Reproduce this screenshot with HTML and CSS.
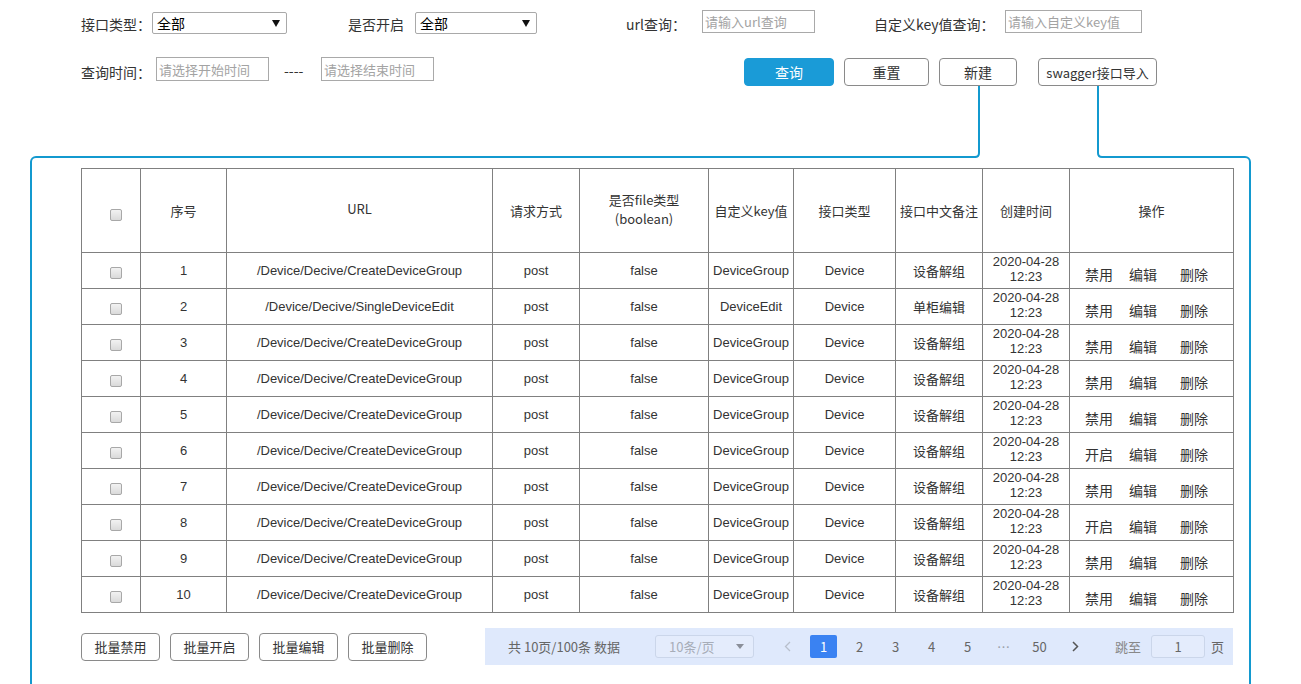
FILE: index.html
```html
<!DOCTYPE html>
<html lang="zh-CN">
<head>
<meta charset="utf-8">
<title>接口管理</title>
<link rel="stylesheet" href="styles.css">
</head>
<body>
<div class="filters">
  <div class="row1">
    <div class="field">
      <span class="lbl w1">接口类型：</span>
      <div class="sel s1"><span>全部</span><i class="tri"></i></div>
    </div>
    <div class="field g2">
      <span class="lbl w2">是否开启</span>
      <div class="sel s2"><span>全部</span><i class="tri"></i></div>
    </div>
    <div class="field g3">
      <span class="lbl w3">url查询：</span>
      <input class="inp i1" placeholder="请输入url查询">
    </div>
    <div class="field g4">
      <span class="lbl w4">自定义key值查询：</span>
      <input class="inp i2" placeholder="请输入自定义key值">
    </div>
  </div>
  <div class="row2">
    <span class="lbl w5">查询时间：</span>
    <input class="inp date" placeholder="请选择开始时间">
    <span class="sep">----</span>
    <input class="inp date" placeholder="请选择结束时间">
    <div class="btns">
      <button class="btn primary b-query">查询</button>
      <button class="btn b-reset">重置</button>
      <button class="btn b-new">新建</button>
      <button class="btn b-swag">swagger接口导入</button>
    </div>
  </div>
</div>

<div class="panel">
  <svg class="connector" width="140" height="76" viewBox="0 0 140 76">
    <rect x="6" y="68" width="126" height="6" fill="#fff"/>
    <path d="M9 0 V67 Q9 71 5 71 H0" fill="none" stroke="#1399cf" stroke-width="2"/>
    <path d="M128 0 V67 Q128 71 132 71 H140" fill="none" stroke="#1399cf" stroke-width="2"/>
  </svg>

  <table class="grid">
    <colgroup>
      <col style="width:59px"><col style="width:86px"><col style="width:266px"><col style="width:87px"><col style="width:129px"><col style="width:85px"><col style="width:102px"><col style="width:87px"><col style="width:87px"><col style="width:164px">
    </colgroup>
    <thead>
      <tr>
        <th class="cbc"><span class="cb hcb"></span></th>
        <th>序号</th>
        <th><span class="up">URL</span></th>
        <th>请求方式</th>
        <th><span class="up">是否file类型<br>(boolean)</span></th>
        <th>自定义key值</th>
        <th>接口类型</th>
        <th>接口中文备注</th>
        <th>创建时间</th>
        <th>操作</th>
      </tr>
    </thead>
    <tbody>
      <tr><td class="cbc"><span class="cb"></span></td><td>1</td><td>/Device/Decive/CreateDeviceGroup</td><td>post</td><td>false</td><td>DeviceGroup</td><td>Device</td><td class="zh">设备解组</td><td><span class="dtx">2020-04-28<br>12:23</span></td><td class="ops"><span class="op o1">禁用</span><span class="op o2">编辑</span><span class="op">删除</span></td></tr>
      <tr><td class="cbc"><span class="cb"></span></td><td>2</td><td>/Device/Decive/SingleDeviceEdit</td><td>post</td><td>false</td><td>DeviceEdit</td><td>Device</td><td class="zh">单柜编辑</td><td><span class="dtx">2020-04-28<br>12:23</span></td><td class="ops"><span class="op o1">禁用</span><span class="op o2">编辑</span><span class="op">删除</span></td></tr>
      <tr><td class="cbc"><span class="cb"></span></td><td>3</td><td>/Device/Decive/CreateDeviceGroup</td><td>post</td><td>false</td><td>DeviceGroup</td><td>Device</td><td class="zh">设备解组</td><td><span class="dtx">2020-04-28<br>12:23</span></td><td class="ops"><span class="op o1">禁用</span><span class="op o2">编辑</span><span class="op">删除</span></td></tr>
      <tr><td class="cbc"><span class="cb"></span></td><td>4</td><td>/Device/Decive/CreateDeviceGroup</td><td>post</td><td>false</td><td>DeviceGroup</td><td>Device</td><td class="zh">设备解组</td><td><span class="dtx">2020-04-28<br>12:23</span></td><td class="ops"><span class="op o1">禁用</span><span class="op o2">编辑</span><span class="op">删除</span></td></tr>
      <tr><td class="cbc"><span class="cb"></span></td><td>5</td><td>/Device/Decive/CreateDeviceGroup</td><td>post</td><td>false</td><td>DeviceGroup</td><td>Device</td><td class="zh">设备解组</td><td><span class="dtx">2020-04-28<br>12:23</span></td><td class="ops"><span class="op o1">禁用</span><span class="op o2">编辑</span><span class="op">删除</span></td></tr>
      <tr><td class="cbc"><span class="cb"></span></td><td>6</td><td>/Device/Decive/CreateDeviceGroup</td><td>post</td><td>false</td><td>DeviceGroup</td><td>Device</td><td class="zh">设备解组</td><td><span class="dtx">2020-04-28<br>12:23</span></td><td class="ops"><span class="op o1">开启</span><span class="op o2">编辑</span><span class="op">删除</span></td></tr>
      <tr><td class="cbc"><span class="cb"></span></td><td>7</td><td>/Device/Decive/CreateDeviceGroup</td><td>post</td><td>false</td><td>DeviceGroup</td><td>Device</td><td class="zh">设备解组</td><td><span class="dtx">2020-04-28<br>12:23</span></td><td class="ops"><span class="op o1">禁用</span><span class="op o2">编辑</span><span class="op">删除</span></td></tr>
      <tr><td class="cbc"><span class="cb"></span></td><td>8</td><td>/Device/Decive/CreateDeviceGroup</td><td>post</td><td>false</td><td>DeviceGroup</td><td>Device</td><td class="zh">设备解组</td><td><span class="dtx">2020-04-28<br>12:23</span></td><td class="ops"><span class="op o1">开启</span><span class="op o2">编辑</span><span class="op">删除</span></td></tr>
      <tr><td class="cbc"><span class="cb"></span></td><td>9</td><td>/Device/Decive/CreateDeviceGroup</td><td>post</td><td>false</td><td>DeviceGroup</td><td>Device</td><td class="zh">设备解组</td><td><span class="dtx">2020-04-28<br>12:23</span></td><td class="ops"><span class="op o1">禁用</span><span class="op o2">编辑</span><span class="op">删除</span></td></tr>
      <tr><td class="cbc"><span class="cb"></span></td><td>10</td><td>/Device/Decive/CreateDeviceGroup</td><td>post</td><td>false</td><td>DeviceGroup</td><td>Device</td><td class="zh">设备解组</td><td><span class="dtx">2020-04-28<br>12:23</span></td><td class="ops"><span class="op o1">禁用</span><span class="op o2">编辑</span><span class="op">删除</span></td></tr>
    </tbody>
  </table>

  <div class="bottom">
    <div class="batch">
      <button class="btn bb">批量禁用</button>
      <button class="btn bb">批量开启</button>
      <button class="btn bb">批量编辑</button>
      <button class="btn bb">批量删除</button>
    </div>
    <div class="pager">
      <span class="total">共 10页/100条 数据</span>
      <div class="psel"><span>10条/页</span><i class="caret"></i></div>
      <div class="pages">
        <span class="pg prev"><svg width="7" height="11" viewBox="0 0 7 11"><path d="M6 1 L1.5 5.5 L6 10" fill="none" stroke="#b8bfcc" stroke-width="1.3"/></svg></span>
        <span class="pg active">1</span>
        <span class="pg">2</span>
        <span class="pg">3</span>
        <span class="pg">4</span>
        <span class="pg">5</span>
        <span class="pg dots">…</span>
        <span class="pg">50</span>
        <span class="pg next"><svg width="7" height="11" viewBox="0 0 7 11"><path d="M1 1 L5.5 5.5 L1 10" fill="none" stroke="#555" stroke-width="1.5"/></svg></span>
      </div>
      <span class="jump">跳至</span>
      <div class="jinp">1</div>
      <span class="page-unit">页</span>
    </div>
  </div>
</div>
</body>
</html>
```

FILE: styles.css
```css
html, body {
  margin: 0;
  padding: 0;
  overflow: hidden;
  background: #fff;
}
body {
  font-family: "Noto Sans CJK SC", "Liberation Sans", sans-serif;
  color: #333;
}

/* ---------- filters ---------- */
.filters {
  padding: 10px 0 0 81px;
}
.row1 {
  display: flex;
  align-items: flex-start;
  height: 24px;
}
.field {
  display: flex;
  align-items: flex-start;
}
.g2 { margin-left: 61px; }
.g3 { margin-left: 89px; }
.g4 { margin-left: 59px; }

.lbl {
  font-size: 14px;
  line-height: 20px;
  margin-top: 4px;
  white-space: nowrap;
  color: #333;
}
.w1 { width: 71px; }
.w2 { width: 67px; }
.w3 { width: 76px; }
.w4 { width: 131px; }
.w5 { width: 75px; margin-top: 5px; }

.sel {
  box-sizing: border-box;
  margin-top: 2px;
  height: 22px;
  border: 1px solid #a9a9a9;
  border-radius: 2px;
  display: flex;
  align-items: center;
  justify-content: space-between;
  padding: 0 6px 0 4px;
  font-size: 14px;
  color: #000;
  background: #fff;
}
.s1 { width: 135px; }
.s2 { width: 122px; }
.tri {
  width: 0;
  height: 0;
  border-left: 4px solid transparent;
  border-right: 4px solid transparent;
  border-top: 7px solid #111;
}

.inp {
  box-sizing: border-box;
  height: 23px;
  border: 1px solid #a9a9a9;
  padding: 0 2px;
  margin: 0;
  font-family: "Noto Sans CJK SC", "Liberation Sans", sans-serif;
  font-size: 13px;
  color: #333;
  outline: none;
  background: #fff;
}
.inp::placeholder { color: #a3a3a3; }
.i1 { width: 113px; }
.i2 { width: 137px; }

.row2 {
  display: flex;
  align-items: flex-start;
  margin-top: 23px;
  height: 29px;
}
.date {
  width: 113px;
  height: 24px;
}
.sep {
  margin-left: 15px;
  width: 37px;
  margin-top: 3px;
  font-size: 14px;
  line-height: 20px;
  color: #333;
}
.btns {
  display: flex;
  margin-left: 310px;
  margin-top: 1px;
}
.btn {
  box-sizing: border-box;
  height: 28px;
  border: 1px solid #8a8a8a;
  border-radius: 4px;
  background: #fff;
  color: #333;
  font-family: "Noto Sans CJK SC", "Liberation Sans", sans-serif;
  font-size: 14px;
  padding: 0;
  margin: 0;
  cursor: pointer;
}
.primary {
  background: #1a9bd7;
  border-color: #1a9bd7;
  color: #fff;
}
.b-query { width: 90px; }
.b-reset { width: 85px; margin-left: 10px; }
.b-new { width: 78px; margin-left: 10px; }
.b-swag { width: 119px; margin-left: 21px; font-size: 13px; }

/* ---------- panel ---------- */
.panel {
  position: relative;
  box-sizing: border-box;
  margin: 70px 50px 0 30px;
  height: 560px;
  border: 2px solid #1399cf;
  border-radius: 6px;
  padding: 10px 0 0 49px;
}
.connector {
  position: absolute;
  left: 938px;
  top: -72px;
  display: block;
}

/* ---------- table ---------- */
.grid {
  border-collapse: collapse;
  table-layout: fixed;
  width: 1152px;
  font-family: "Liberation Sans", "Noto Sans CJK SC", sans-serif;
  font-size: 13px;
  color: #333;
}
.grid th, .grid td {
  border: 1px solid #808080;
  text-align: center;
  vertical-align: middle;
  padding: 0;
  white-space: nowrap;
}
.grid th {
  height: 83px;
  font-family: "Noto Sans CJK SC", "Liberation Sans", sans-serif;
  font-weight: normal;
  font-size: 13px;
  line-height: 19px;
}
.up {
  display: inline-block;
  margin-bottom: 4px;
}
.grid td {
  height: 35px;
  line-height: 16px;
}
.grid td.zh {
  font-family: "Noto Sans CJK SC", "Liberation Sans", sans-serif;
}
.dtx {
  display: inline-block;
  line-height: 15px;
  margin-bottom: 3px;
}
.grid .cbc {
  text-align: left;
  padding-left: 28px;
}
.cb {
  display: inline-block;
  box-sizing: border-box;
  width: 12px;
  height: 12px;
  border: 1px solid #a8a8a8;
  border-radius: 2px;
  background: linear-gradient(#f2f2f2, #dadada);
  vertical-align: middle;
  margin-top: 3px;
}
.hcb { margin-top: 7px; }
.grid td.ops {
  text-align: left;
  padding-left: 15px;
  font-family: "Noto Sans CJK SC", "Liberation Sans", sans-serif;
  font-size: 14px;
}
.op {
  display: inline-block;
  margin-top: 6px;
}
.o1 { margin-right: 16px; }
.o2 { margin-right: 23px; }

/* ---------- bottom ---------- */
.bottom {
  width: 1152px;
  margin-top: 15px;
  display: flex;
  justify-content: space-between;
  align-items: center;
}
.batch {
  display: flex;
  gap: 10px;
}
.bb {
  width: 79px;
  font-size: 13px;
}
.pager {
  box-sizing: border-box;
  width: 748px;
  height: 37px;
  background: #dfe9fc;
  display: flex;
  align-items: center;
  padding-left: 23px;
  font-family: "Noto Sans CJK SC", "Liberation Sans", sans-serif;
  font-size: 13px;
  color: #666;
}
.total {
  width: 110px;
  white-space: nowrap;
}
.psel {
  box-sizing: border-box;
  margin-left: 37px;
  width: 99px;
  height: 23px;
  border: 1px solid #cbd6ea;
  border-radius: 3px;
  background: #e4ecfc;
  display: flex;
  align-items: center;
  justify-content: space-between;
  padding: 0 9px 0 13px;
  color: #a7adb8;
}
.caret {
  width: 0;
  height: 0;
  border-left: 4px solid transparent;
  border-right: 4px solid transparent;
  border-top: 5px solid #8a8f99;
}
.pages {
  display: flex;
  margin-left: 20px;
  gap: 9px;
}
.pg {
  width: 27px;
  height: 23px;
  display: flex;
  align-items: center;
  justify-content: center;
  color: #666;
}
.pg.active {
  background: #3a82f2;
  color: #fff;
  border-radius: 2px;
}
.pg.dots { color: #9aa0aa; }
.jump {
  margin-left: 26px;
  color: #888;
}
.jinp {
  box-sizing: border-box;
  margin-left: 10px;
  width: 54px;
  height: 23px;
  border: 1px solid #cbd6ea;
  border-radius: 3px;
  background: #e4ecfc;
  display: flex;
  align-items: center;
  justify-content: center;
  color: #666;
}
.page-unit {
  margin-left: 6px;
  color: #666;
}
```
